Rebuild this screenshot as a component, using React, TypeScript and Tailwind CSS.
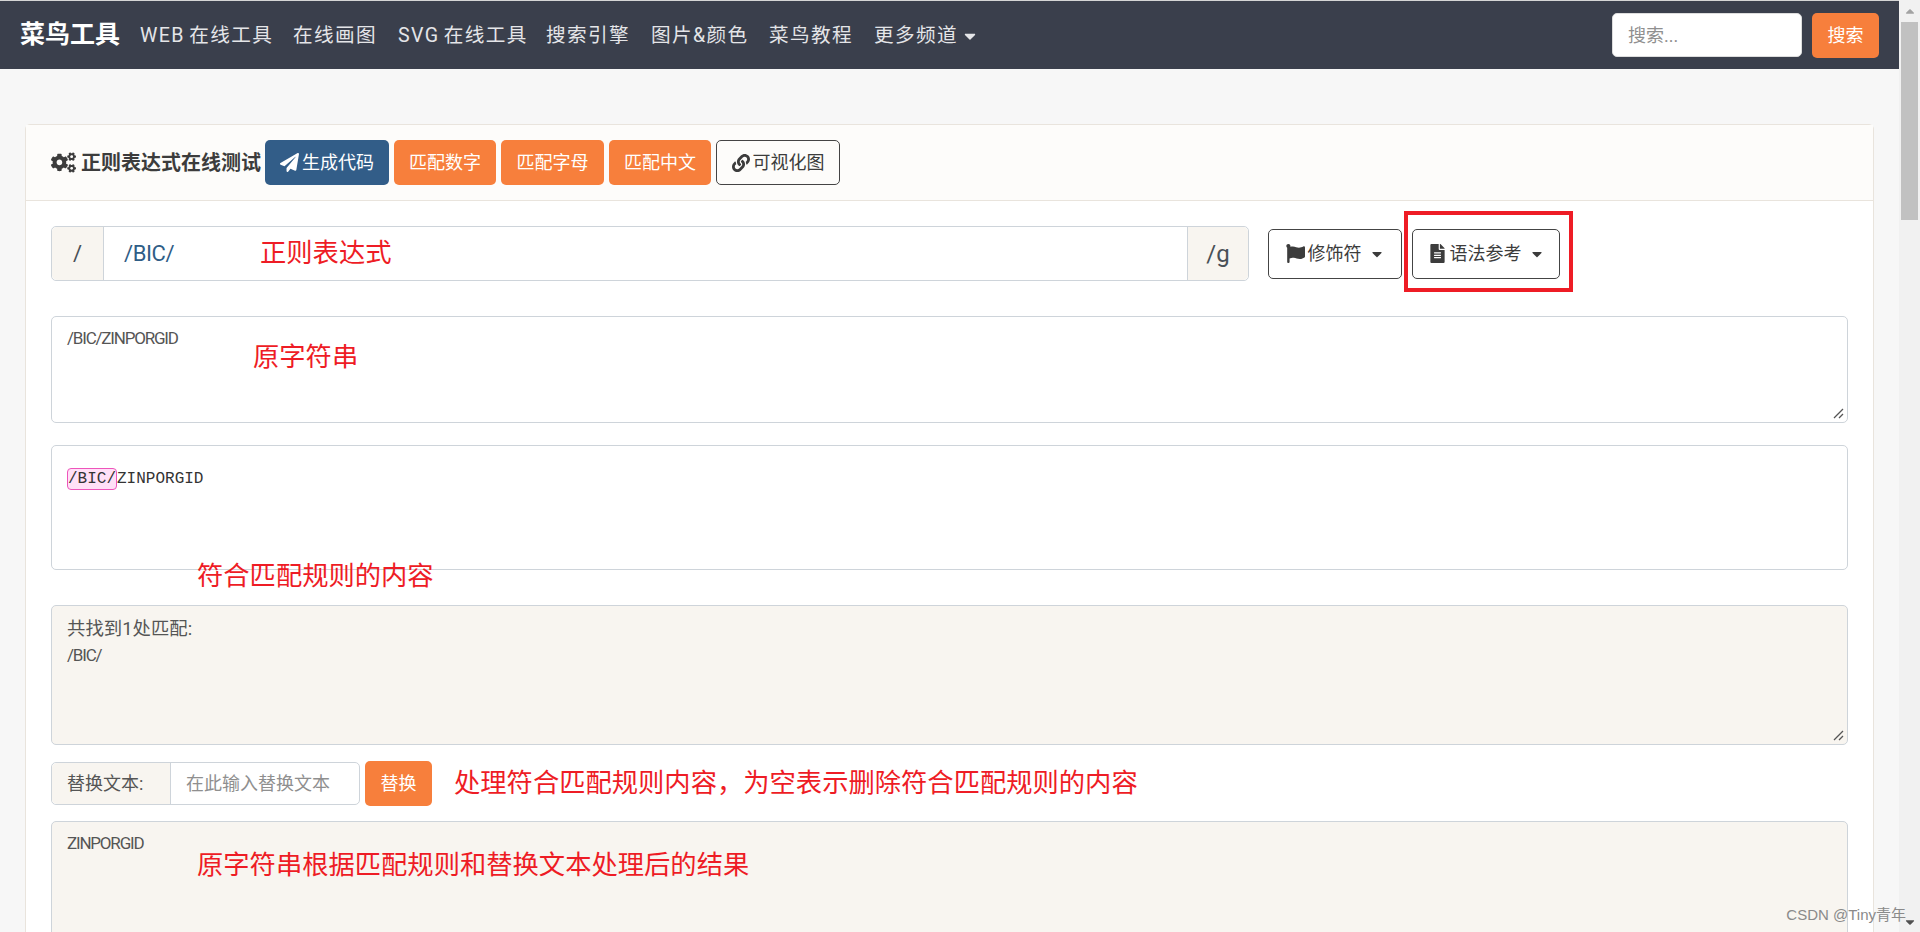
import { FaCaretDown, FaCogs, FaFileAlt, FaFlag, FaLink, FaPaperPlane } from "react-icons/fa";

const navLinks = [
  { label: "WEB 在线工具", width: "w-[133px]" },
  { label: "在线画图", width: "w-[85px]" },
  { label: "SVG 在线工具", width: "w-[128px]" },
  { label: "搜索引擎", width: "w-[85px]" },
  { label: "图片&颜色", width: "w-[98px]" },
  { label: "菜鸟教程", width: "w-[85px]" },
];

function Grip() {
  return (
    <svg className="absolute right-[3px] bottom-[3px]" width="11" height="11" viewBox="0 0 11 11">
      <path d="M1 10 10 1M6 10l4-4" stroke="#555" strokeWidth="1.3" fill="none" />
    </svg>
  );
}

function Note({ className, children }: { className: string; children: string }) {
  return (
    <span className={`absolute whitespace-nowrap text-[26.3px] leading-[36px] text-[#ee1c25] ${className}`}>
      {children}
    </span>
  );
}

function OrangeButton({ label, className }: { label: string; className: string }) {
  return (
    <button
      type="button"
      className={`flex h-[45px] items-center justify-center rounded-[5px] bg-[#f77f3c] text-[18px] text-white ${className}`}
    >
      {label}
    </button>
  );
}

export default function App() {
  return (
    <div className="flex h-[932px] overflow-hidden bg-[#f7f7f7] font-['Roboto','Noto_Sans_CJK_SC',sans-serif] text-[#3c3c3c]">
      <main className="min-w-0 flex-1">
        <nav className="flex h-[69px] items-center border-t border-[#d5d5d5] bg-[#3a3f4c] pr-[20px] pl-[20px]">
          <span className="mr-[20px] text-[25px] font-bold whitespace-nowrap text-white">菜鸟工具</span>
          <div className="flex gap-[20px] pt-[2px] text-[19.6px] tracking-[1.4px] text-[#e4e5e8] [word-spacing:-2px]">
            {navLinks.map((link) => (
              <span key={link.label} className={`whitespace-nowrap ${link.width}`}>
                {link.label}
              </span>
            ))}
            <span className="flex items-center whitespace-nowrap">
              更多频道
              <FaCaretDown className="ml-[3px] text-[18px]" />
            </span>
          </div>
          <input
            placeholder="搜索..."
            className="ml-auto h-[44px] w-[190px] rounded-[5px] border border-[#ddd] bg-white px-[15px] text-[18px] placeholder:text-[#8f8f8f]"
          />
          <OrangeButton label="搜索" className="ml-[10px] w-[67px]" />
        </nav>

        <section className="mx-[25px] mt-[55px] rounded-t-[5px] border border-[#e9e4dd] bg-white">
          <header className="flex h-[76px] items-center gap-[5px] border-b border-[#e9e4dd] bg-[#fdfcfa] px-[25px]">
            <h1 className="flex w-[209px] items-center gap-[5px] text-[20px] font-bold whitespace-nowrap">
              <FaCogs className="shrink-0 text-[25px]" />
              正则表达式在线测试
            </h1>
            <button
              type="button"
              className="flex h-[45px] w-[124px] items-center justify-center gap-[3px] rounded-[5px] bg-[#325d88] text-[18px] text-white"
            >
              <FaPaperPlane className="text-[19px]" />
              生成代码
            </button>
            <OrangeButton label="匹配数字" className="w-[102px]" />
            <OrangeButton label="匹配字母" className="w-[103px]" />
            <OrangeButton label="匹配中文" className="w-[102px]" />
            <button
              type="button"
              className="flex h-[45px] w-[124px] items-center justify-center gap-[3px] rounded-[5px] border border-[#444] text-[18px]"
            >
              <FaLink className="text-[18px]" />
              可视化图
            </button>
          </header>

          <div className="flex flex-col px-[25px] pt-[25px]">
            <div className="flex items-center">
              <div className="relative flex h-[55px] w-[1198px] rounded-[5px] border border-[#ced4da] text-[22px] text-[#495057]">
                <span className="flex w-[52px] items-center justify-center rounded-l-[5px] border-r border-[#ced4da] bg-[#f8f5f0]">
                  /
                </span>
                <span className="flex flex-1 items-center pl-[20px] tracking-[-0.4px] text-[#2f5d86]">/BIC/</span>
                <span className="flex w-[61px] items-center justify-center rounded-r-[5px] border-l border-[#ced4da] bg-[#f8f5f0] text-[24px]">
                  /g
                </span>
                <Note className="top-[8px] left-[208px]">正则表达式</Note>
              </div>
              <button
                type="button"
                className="ml-[19px] flex h-[50px] w-[134px] items-center justify-center gap-[3px] rounded-[5px] border border-[#444] text-[18px]"
              >
                <FaFlag className="text-[19px]" />
                修饰符
                <FaCaretDown className="ml-[4px] text-[16px]" />
              </button>
              <div className="relative ml-[10px]">
                <button
                  type="button"
                  className="flex h-[50px] w-[148px] items-center justify-center gap-[3px] rounded-[5px] border border-[#444] text-[18px]"
                >
                  <FaFileAlt className="text-[19px]" />
                  语法参考
                  <FaCaretDown className="ml-[4px] text-[16px]" />
                </button>
                <div className="absolute top-[-18px] left-[-8px] h-[81px] w-[169px] border-[4px] border-[#ee1c25]" />
              </div>
            </div>

            <div className="relative mt-[35px] h-[107px] rounded-[5px] border border-[#ced4da] px-[15px] py-[10px] text-[17px] leading-[22px] tracking-[-1.2px] text-[#555]">
              /BIC/ZINPORGID
              <Note className="top-[22px] left-[201px] tracking-normal">原字符串</Note>
              <Grip />
            </div>

            <div className="relative mt-[22px] h-[125px] rounded-[5px] border border-[#ced4da] px-[15px] pt-[22px] font-['Liberation_Mono',monospace] text-[16px] leading-[22px] text-[#333]">
              <span className="inline-block rounded-[4px] border border-[#ee55bb] bg-[#ffe0f7] leading-[20px]">/BIC/</span>
              ZINPORGID
              <span className="absolute top-[112px] left-[145px] whitespace-nowrap font-['Roboto','Noto_Sans_CJK_SC',sans-serif] text-[26.3px] leading-[36px] text-[#ee1c25]">
                符合匹配规则的内容
              </span>
            </div>

            <div className="relative mt-[35px] h-[140px] rounded-[5px] border border-[#ced4da] bg-[#f8f5f0] px-[15px] pt-[10px] text-[18.4px] leading-[26px] text-[#555]">
              <p>共找到1处匹配:</p>
              <p className="text-[17px] tracking-[-1.2px]">/BIC/</p>
              <Grip />
            </div>

            <div className="relative mt-[16px] flex items-center">
              <div className="flex h-[43px] w-[309px] rounded-[5px] border border-[#ced4da] text-[18px]">
                <span className="flex w-[119px] items-center rounded-l-[5px] border-r border-[#ced4da] bg-[#f8f5f0] pl-[15px] text-[#555]">
                  替换文本:
                </span>
                <span className="flex flex-1 items-center pl-[15px] text-[#8f8f8f]">在此输入替换文本</span>
              </div>
              <OrangeButton label="替换" className="ml-[5px] w-[67px]" />
              <Note className="top-[4px] left-[403px]">处理符合匹配规则内容，为空表示删除符合匹配规则的内容</Note>
            </div>

            <div className="relative mt-[15px] h-[200px] rounded-[5px] border border-[#ced4da] bg-[#f8f5f0] px-[15px] py-[10px] text-[17px] leading-[22px] tracking-[-1.2px] text-[#555]">
              ZINPORGID
              <Note className="top-[25px] left-[145px] tracking-normal">原字符串根据匹配规则和替换文本处理后的结果</Note>
            </div>
          </div>
        </section>
      </main>

      <aside className="relative flex w-[21px] shrink-0 flex-col items-center bg-[#f1f1f1]">
        <FaCaretDown className="mt-[5px] mb-[3px] rotate-180 text-[14px] text-[#a3a3a3]" />
        <div className="h-[198px] w-[17px] bg-[#c1c1c1]" />
        <FaCaretDown className="mt-auto mb-[3px] text-[14px] text-[#505050]" />
        <span className="absolute right-[14px] bottom-[6px] font-['Liberation_Sans','Noto_Sans_CJK_SC',sans-serif] text-[15px] leading-[22px] whitespace-nowrap text-[#8a8a8a]">
          CSDN @Tiny青年
        </span>
      </aside>
    </div>
  );
}
